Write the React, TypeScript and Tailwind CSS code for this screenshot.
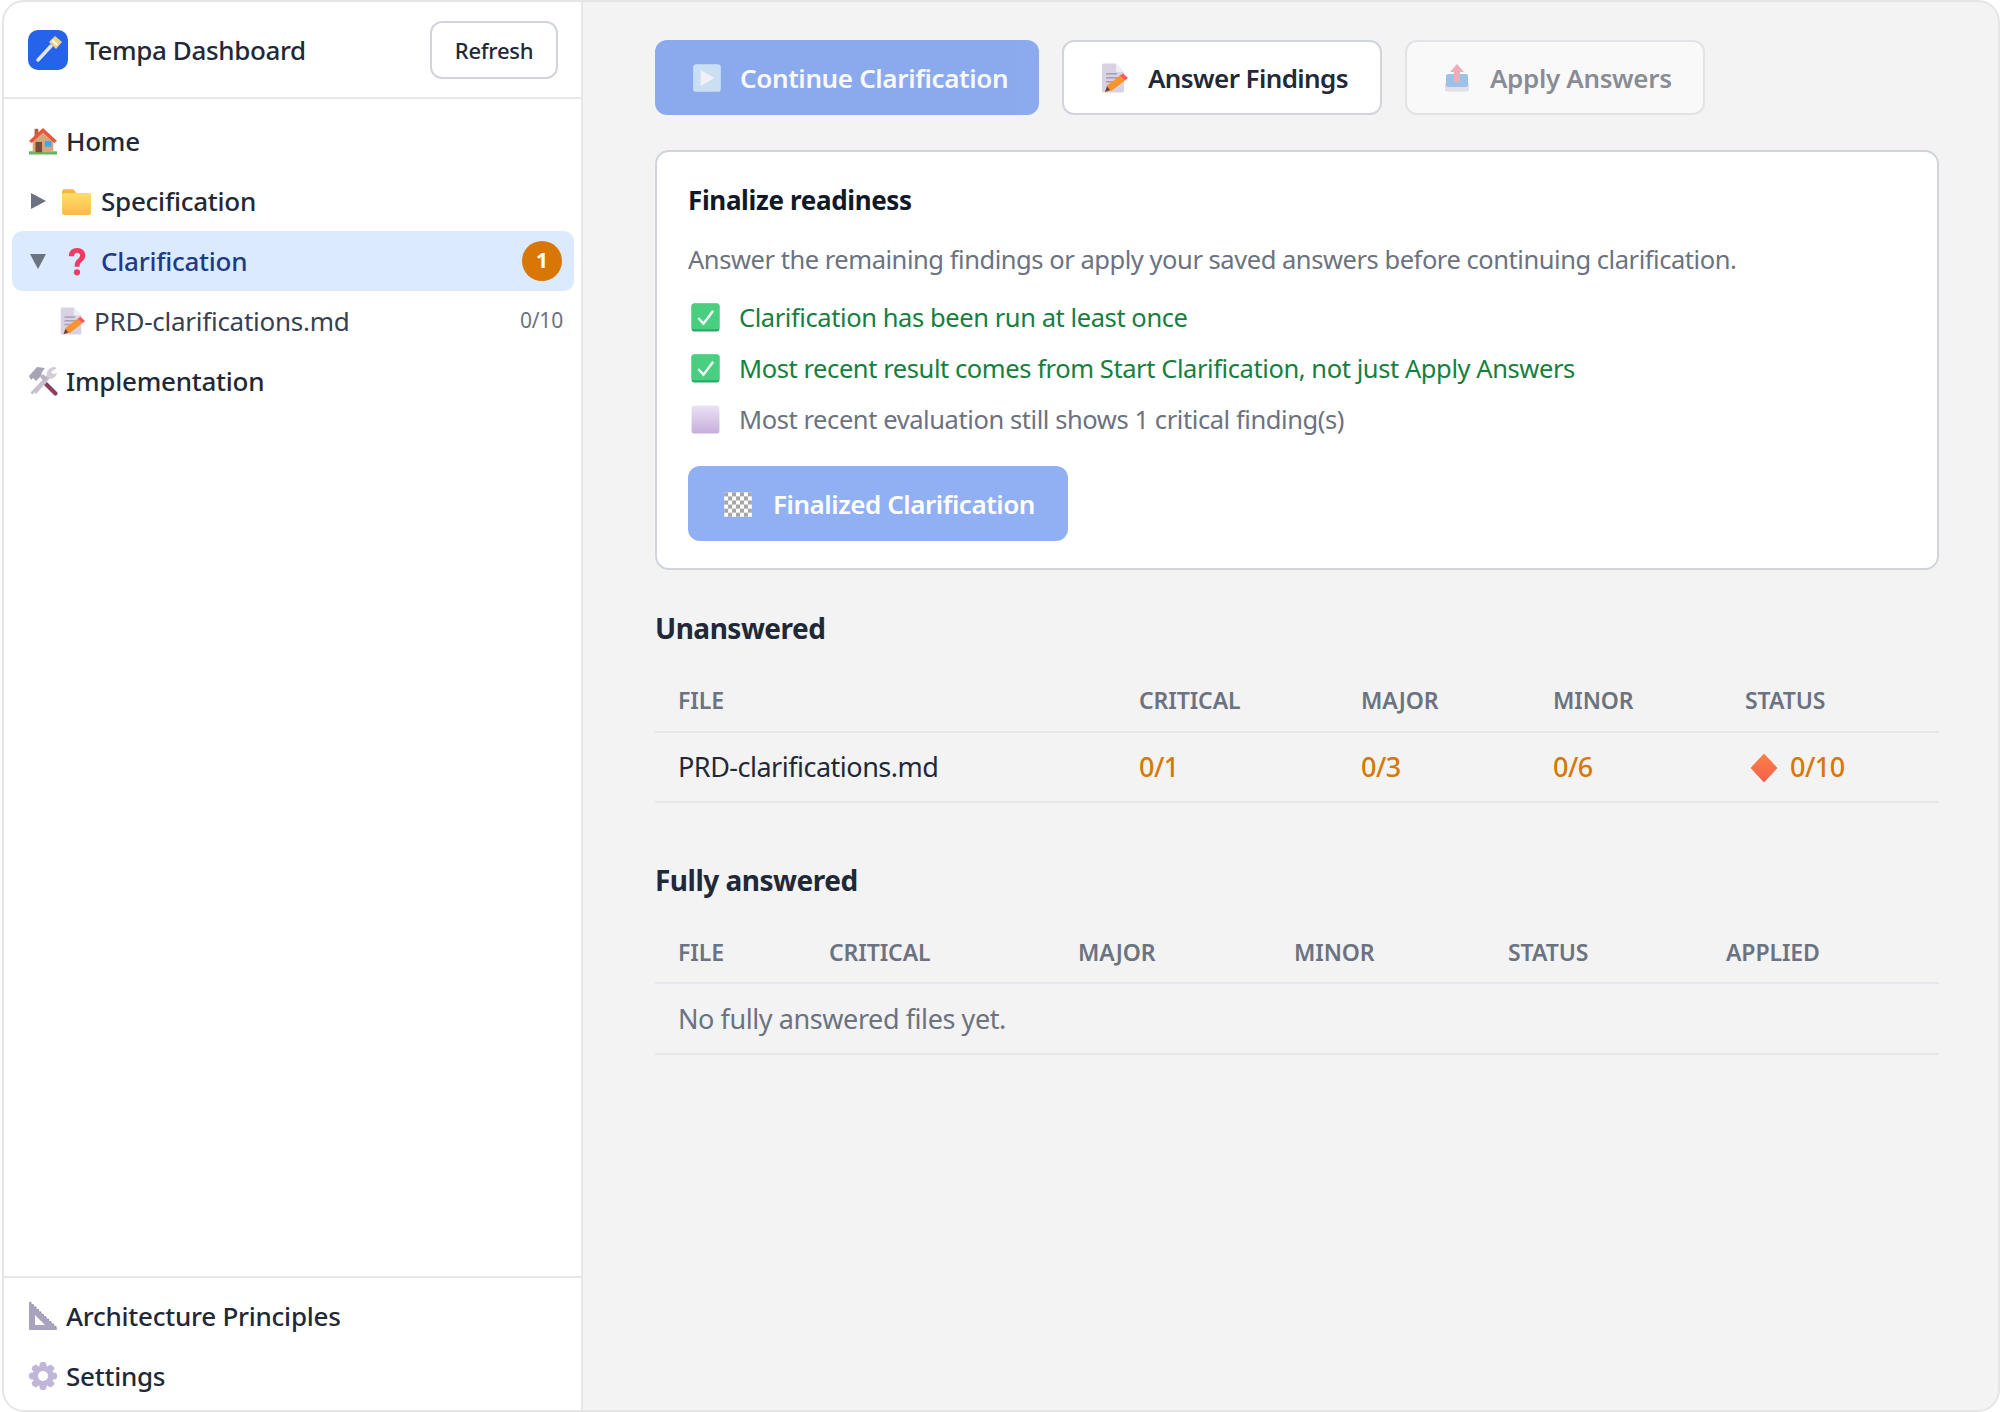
import React from "react";

const Ico = ({ s = 32, children, vb = "0 0 32 32" }: { s?: number; children: React.ReactNode; vb?: string }) => (
  <svg width={s} height={s} viewBox={vb} className="shrink-0 block">{children}</svg>
);

const House = () => (
  <Ico s={30}>
    <rect x="1" y="27" width="30" height="3.5" rx="0.5" fill="#5cb85c" />
    <path d="M5 14 L16 4 L27 14 V28 H5 Z" fill="#d6a77f" />
    <rect x="7" y="3" width="4" height="8" fill="#b0603f" />
    <path d="M1 16 L16 2 L31 16 L28 18 L16 7 L4 18 Z" fill="#e4573d" />
    <rect x="8" y="17" width="7" height="11" fill="#7a4a35" />
    <rect x="18" y="16" width="7" height="6" fill="#3fa9e6" />
  </Ico>
);
const Folder = () => (
  <Ico s={33}>
    <path d="M2 6 a2 2 0 0 1 2-2 h9 l3 4 h12 a2 2 0 0 1 2 2 v2 H2 Z" fill="#f5b63f" />
    <rect x="2" y="8" width="28" height="21" rx="2" fill="url(#fg)" />
    <defs>
      <linearGradient id="fg" x1="0" y1="0" x2="0" y2="1">
        <stop offset="0" stopColor="#ffdf6b" />
        <stop offset="1" stopColor="#fdb94a" />
      </linearGradient>
    </defs>
  </Ico>
);
const Question = () => (
  <Ico s={33}>
    <path d="M8.5 11 C8.5 6 12 3 16.5 3 C21.2 3 24.5 6 24.5 10 C24.5 14 22 15.5 20.3 17 C19.3 18 19 19 19 21 H14.2 C14.2 18 14.7 16 16.5 14.3 C18 13 19.5 12 19.5 10 C19.5 8.5 18.3 7.5 16.5 7.5 C14.7 7.5 13.5 9 13.5 11 Z" fill="#f13a63" />
    <circle cx="16.5" cy="26.5" r="3" fill="#f13a63" />
  </Ico>
);
const Memo = ({ s = 32 }: { s?: number }) => (
  <Ico s={s}>
    <path d="M4 3 a1.5 1.5 0 0 1 1.5-1.5 H18 L26 10 V29 a1.5 1.5 0 0 1-1.5 1.5 H5.5 A1.5 1.5 0 0 1 4 29 Z" fill="#d9d2e3" />
    <path d="M18 1.5 L26 10 H19.5 A1.5 1.5 0 0 1 18 8.5 Z" fill="#f1edf6" />
    <rect x="8" y="11" width="11" height="1.6" fill="#a89fb5" />
    <rect x="8" y="15" width="14" height="1.6" fill="#a89fb5" />
    <rect x="8" y="19" width="10" height="1.6" fill="#a89fb5" />
    <path d="M7 30 L9 23.5 L22 13.5 L27 18.5 L14 28.5 Z" fill="#f8942c" />
    <path d="M22 13.5 L25 11.5 L30 16 L27 18.5 Z" fill="#f8575c" />
    <path d="M7 30 L9 24.5 L12 28 Z" fill="#5a4060" />
  </Ico>
);
const Tools = () => (
  <Ico>
    <path d="M6 25 L21 9 L24 12 L9 29 Z" fill="#c4c0cc" />
    <path d="M2 11 L10 2 L18 3 L15 7 L14 11 L9 16 L6 13 L4 15 Z" fill="#a8a4b3" />
    <path d="M30 3 A7 7 0 0 0 20 11 L23 14 A7 7 0 0 0 30 8 L26 9 L24 7 Z" fill="#d2ced9" />
    <path d="M13 12 L16 9 L20 13 L17 16 Z" fill="#b5b1bd" />
    <path d="M17 20 L20 17 L30 27 A2 2 0 0 1 27 30 Z" fill="#8e3f5e" />
    <path d="M4 27 L9 22 L11 24 L6 29 A1.5 1.5 0 0 1 4 27 Z" fill="#c4c0cc" />
  </Ico>
);
const Triangle = () => (
  <Ico>
    <path fillRule="evenodd" d="M3 2 L30 28 A1.5 1.5 0 0 1 29 30 H3 A1 1 0 0 1 2 29 V3 Z M8 15 V24 a1 1 0 0 0 1 1 H18 Z" fill="#aaa3bf" />
    <path d="M3 2 L30 28" stroke="#8f80b8" strokeWidth="1.4" strokeDasharray="1.5 2" fill="none" />
  </Ico>
);
const Gear = () => (
  <Ico>
    <g fill="#c0b6d8">
      {[0, 45, 90, 135, 180, 225, 270, 315].map((a) => (
        <rect key={a} x="12.5" y="2" width="7" height="8" rx="3" transform={`rotate(${a} 16 16)`} />
      ))}
      <circle cx="16" cy="16" r="10.5" />
    </g>
    <circle cx="16" cy="16" r="5" fill="#ffffff" />
  </Ico>
);
const Play = () => (
  <Ico s={34}>
    <rect x="3" y="3" width="26" height="26" rx="3" fill="#a5cdf2" />
    <path d="M10 8.5 L23 16 L10 23.5 Z" fill="#f2ecfa" />
  </Ico>
);
const Tray = () => (
  <Ico>
    <path d="M4 21 H28 V27 a2.5 2.5 0 0 1-2.5 2.5 H6.5 A2.5 2.5 0 0 1 4 27 Z" fill="#d3cce0" />
    <rect x="5" y="12" width="22" height="13" rx="2" fill="#4b93d8" />
    <path d="M16 2 L23 10 H19 V20 H13 V10 H9 Z" fill="#ef6a80" />
  </Ico>
);
const CheckOn = () => (
  <Ico s={33}>
    <rect x="2.5" y="2.5" width="27" height="27" rx="2.5" fill="#2ba866" />
    <rect x="2.5" y="2.5" width="27" height="25" rx="2.5" fill="#48cf80" />
    <path d="M9 16.5 L14 22 L23.5 9.5" stroke="#f5fff8" strokeWidth="2.4" fill="none" />
  </Ico>
);
const CheckOff = () => (
  <Ico s={33}>
    <defs>
      <linearGradient id="co" x1="0" y1="0" x2="0" y2="1">
        <stop offset="0" stopColor="#ece1f5" />
        <stop offset="1" stopColor="#c6aedd" />
      </linearGradient>
    </defs>
    <rect x="2.5" y="2.5" width="27" height="27" rx="2.5" fill="url(#co)" />
  </Ico>
);
const Checker = () => (
  <Ico s={34}>
    <rect x="3" y="5" width="26" height="23" fill="#ffffff" />
    {Array.from({ length: 6 }).flatMap((_, r) =>
      Array.from({ length: 7 }).map((_, c) =>
        (r + c) % 2 === 0 ? <rect key={`${r}-${c}`} x={3 + c * 3.72} y={5 + r * 3.84} width="3.72" height="3.84" fill="#4f4f4f" /> : null
      )
    )}
  </Ico>
);
const Diamond = () => (
  <Ico>
    <defs>
      <linearGradient id="dm" x1="0" y1="0" x2="0" y2="1">
        <stop offset="0" stopColor="#fb8245" />
        <stop offset="1" stopColor="#f55d4f" />
      </linearGradient>
    </defs>
    <path d="M16 1.5 L29.5 16 L16 30.5 L2.5 16 Z" fill="url(#dm)" />
  </Ico>
);
const Logo = () => (
  <div className="w-10 h-10 rounded-[10px] bg-[#2563eb] flex items-center justify-center shrink-0">
    <svg width="32" height="34" viewBox="0 0 32 34" className="block">
      <path d="M6 27 L19 13" stroke="#dfe6f3" strokeWidth="3.5" strokeLinecap="round" />
      <path d="M17 9 L23 3 L30 9 L24 16 Z" fill="#f2d27c" />
      <path d="M20 7 L25 12" stroke="#ffffff" strokeWidth="2" />
    </svg>
  </div>
);

const Caret = ({ down }: { down?: boolean }) => (
  <svg width="18" height="18" viewBox="0 0 18 18" className="shrink-0 block">
    {down ? <path d="M1 2 H17 L9 17 Z" fill="#6b7280" /> : <path d="M2 1 L17 9 L2 17 Z" fill="#6b7280" />}
  </svg>
);

const NavRow = ({ icon, label }: { icon: React.ReactNode; label: string }) => (
  <div className="h-[60px] flex items-center gap-[7px] pl-[23px] text-[26px] font-medium tracking-[-0.25px] text-[#1f2937]">
    <div className="w-8 flex justify-center">{icon}</div>
    <span>{label}</span>
  </div>
);

const btn = "h-[75px] rounded-[12px] flex items-center text-[26px] font-semibold tracking-[-0.35px]";

const Check = ({ on, children }: { on?: boolean; children: React.ReactNode }) => (
  <div className={`flex items-center gap-[17px] ml-[1px] h-[51px] text-[25.5px] tracking-[-0.42px] ${on ? "text-[#15803d]" : "text-[#6b7280]"}`}>
    {on ? <CheckOn /> : <CheckOff />}
    <span>{children}</span>
  </div>
);

const Th = ({ w, children }: { w: string; children: React.ReactNode }) => (
  <th className={`${w} text-left font-semibold text-[23px] uppercase tracking-[-0.1px] text-[#6b7280] pl-[23px] pb-[13px]`}>{children}</th>
);

const Td = ({ children }: { children: React.ReactNode }) => (
  <td className="pl-[23px] pt-[2px] h-[70px] text-[27px] tracking-[-0.5px] font-medium text-[#d97706] border-b-2 border-[#e5e7eb]">{children}</td>
);

export default function App() {
  return (
    <div className="w-[2000px] h-[1412px] bg-white pl-[2px]" style={{ fontFamily: '"Noto Sans", sans-serif' }}>
      <div className="w-full h-full rounded-[22px] border-2 border-[#e5e5e5] overflow-hidden flex bg-[#f3f3f3]">
        <aside className="w-[579px] shrink-0 bg-white border-r-2 border-[#e5e7eb] flex flex-col">
          <div className="h-[97px] shrink-0 flex items-center justify-between pl-[24px] pr-[23px] border-b-2 border-[#e5e7eb]">
            <div className="flex items-center gap-[17px]">
              <Logo />
              <span className="pt-[2px] text-[26px] font-medium tracking-[-0.37px] text-[#1f2937]">Tempa Dashboard</span>
            </div>
            <div className="w-[128px] h-[58px] pt-[2px] rounded-[12px] border-2 border-[#d1d5db] flex items-center justify-center text-[22px] font-medium tracking-[-0.3px] text-[#1f2937]">Refresh</div>
          </div>
          <nav className="flex-1 pt-[12px]">
            <NavRow icon={<House />} label="Home" />
            <div className="h-[60px] flex items-center pl-[25px] text-[26px] font-medium tracking-[-0.25px] text-[#1f2937]">
              <Caret />
              <div className="ml-[13px] mr-[8px]"><Folder /></div>
              <span>Specification</span>
            </div>
            <div className="h-[60px] ml-[8px] mr-[7px] rounded-[10px] bg-[#dbeafe] flex items-center pl-[17px] pr-[12px] text-[26px] font-medium tracking-[-0.25px] text-[#1e3a8a]">
              <Caret down />
              <div className="ml-[13px] mr-[8px]"><Question /></div>
              <span className="flex-1">Clarification</span>
              <span className="w-10 h-10 rounded-full bg-[#d97706] text-white text-[21px] font-bold flex items-center justify-center">1</span>
            </div>
            <div className="h-[60px] flex items-center pl-[53px] pr-[18px] text-[26px] tracking-[-0.25px] text-[#374151]">
              <Memo s={30} />
              <span className="ml-[7px] flex-1">PRD-clarifications.md</span>
              <span className="text-[21px] tracking-[-0.2px] text-[#6b7280]">0/10</span>
            </div>
            <NavRow icon={<Tools />} label="Implementation" />
          </nav>
          <div className="shrink-0 h-[134px] border-t-2 border-[#e5e7eb] pt-[8px]">
            <NavRow icon={<Triangle />} label="Architecture Principles" />
            <NavRow icon={<Gear />} label="Settings" />
          </div>
        </aside>

        <main className="flex-1 pl-[72px] pr-[59px] pt-[38px]">
          <div className="flex">
            <div className={`${btn} w-[384px] bg-[#2563eb] opacity-50 text-white pl-[35px]`}>
              <Play /><span className="ml-[16px] mt-[2px]">Continue Clarification</span>
            </div>
            <div className={`${btn} ml-[23px] w-[320px] bg-white border-2 border-[#d1d5db] text-[#1f2937] pl-[34px]`}>
              <Memo /><span className="ml-[18px] mt-[2px] tracking-[-0.6px]">Answer Findings</span>
            </div>
            <div className={`${btn} ml-[23px] w-[300px] bg-white border-2 border-[#d1d5db] text-[#1f2937] opacity-50 pl-[34px]`}>
              <Tray /><span className="ml-[17px] mt-[2px]">Apply Answers</span>
            </div>
          </div>

          <section className="mt-[35px] h-[420px] rounded-[14px] bg-white border-2 border-[#d1d5db] px-[31px] pt-[28px]">
            <h2 className="text-[26px] leading-[40px] font-bold tracking-[-0.35px] text-[#111827]">Finalize readiness</h2>
            <p className="mt-[19px] text-[25.5px] leading-[40px] tracking-[-0.46px] text-[#6b7280]">Answer the remaining findings or apply your saved answers before continuing clarification.</p>
            <div className="mt-[13px]">
              <Check on>Clarification has been run at least once</Check>
              <Check on>Most recent result comes from Start Clarification, not just Apply Answers</Check>
              <Check>Most recent evaluation still shows 1 critical finding(s)</Check>
            </div>
            <div className={`${btn} mt-[21px] w-[380px] bg-[#2563eb] opacity-50 text-white pl-[33px]`}>
              <Checker /><span className="ml-[18px] mt-[2px] tracking-[-0.45px]">Finalized Clarification</span>
            </div>
          </section>

          <h3 className="mt-[38px] text-[28px] leading-[40px] font-bold tracking-[-0.5px] text-[#1f2937]">Unanswered</h3>
          <table className="mt-[35px] w-full border-collapse table-fixed">
            <thead>
              <tr className="border-b-2 border-[#e5e7eb]">
                <Th w="w-[461px]">File</Th>
                <Th w="w-[222px]">Critical</Th>
                <Th w="w-[192px]">Major</Th>
                <Th w="w-[192px]">Minor</Th>
                <Th w="w-auto">Status</Th>
              </tr>
            </thead>
            <tbody>
              <tr>
                <td className="pl-[23px] pt-[2px] h-[70px] text-[27px] tracking-[-0.5px] text-[#1f2937] border-b-2 border-[#e5e7eb]">PRD-clarifications.md</td>
                <Td>0/1</Td>
                <Td>0/3</Td>
                <Td>0/6</Td>
                <Td>
                  <span className="flex items-center gap-[10px] ml-[3px]"><Diamond /><span>0/10</span></span>
                </Td>
              </tr>
            </tbody>
          </table>

          <h3 className="mt-[57px] text-[28px] leading-[40px] font-bold tracking-[-0.5px] text-[#1f2937]">Fully answered</h3>
          <table className="mt-[35px] w-full border-collapse table-fixed">
            <thead>
              <tr className="border-b-2 border-[#e5e7eb]">
                <Th w="w-[151px]">File</Th>
                <Th w="w-[249px]">Critical</Th>
                <Th w="w-[216px]">Major</Th>
                <Th w="w-[214px]">Minor</Th>
                <Th w="w-[218px]">Status</Th>
                <Th w="w-auto">Applied</Th>
              </tr>
            </thead>
            <tbody>
              <tr>
                <td colSpan={6} className="pl-[23px] pt-[2px] h-[71px] text-[27px] tracking-[-0.42px] text-[#6b7280] border-b-2 border-[#e5e7eb]">No fully answered files yet.</td>
              </tr>
            </tbody>
          </table>
        </main>
      </div>
    </div>
  );
}
